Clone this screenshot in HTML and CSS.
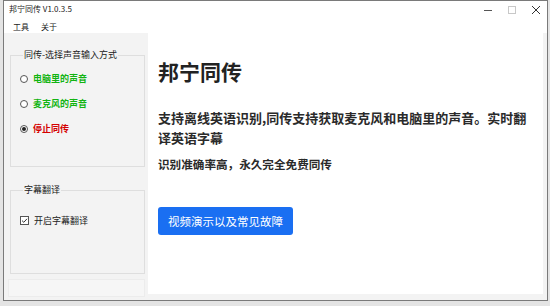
FILE: index.html
```html
<!DOCTYPE html>
<html lang="zh-CN">
<head>
<meta charset="utf-8">
<title>邦宁同传</title>
<link rel="stylesheet" href="styles.css">
</head>
<body>
<div class="screen">
  <div class="window">
    <div class="titlebar">
      <span class="title">邦宁同传 V1.0.3.5</span>
      <div class="controls">
        <svg class="ctl" width="10" height="10" viewBox="0 0 10 10"><path d="M1 5.5h8" stroke="#555" stroke-width="1"/></svg>
        <svg class="ctl" width="10" height="10" viewBox="0 0 10 10"><rect x="1.5" y="1.5" width="7" height="7" fill="none" stroke="#c8c8c8" stroke-width="1"/></svg>
        <svg class="ctl" width="10" height="10" viewBox="0 0 10 10"><path d="M1 1L9 9M9 1L1 9" stroke="#333" stroke-width="1"/></svg>
      </div>
    </div>
    <div class="menubar">
      <span class="menu">工具</span>
      <span class="menu">关于</span>
    </div>
    <div class="client">
      <div class="sidebar">
        <fieldset class="group g1">
          <legend>同传-选择声音输入方式</legend>
          <div class="opt green"><span class="radio"></span>电脑里的声音</div>
          <div class="opt green"><span class="radio"></span>麦克风的声音</div>
          <div class="opt red"><span class="radio on"></span>停止同传</div>
        </fieldset>
        <fieldset class="group g2">
          <legend>字幕翻译</legend>
          <div class="opt plain">
            <svg class="check" width="9" height="9" viewBox="0 0 9 9"><rect x="0.5" y="0.5" width="8" height="8" fill="#fff" stroke="#555"/><path d="M2 4.6L3.8 6.3L7 2.8" fill="none" stroke="#333" stroke-width="1"/></svg>开启字幕翻译
          </div>
        </fieldset>
        <div class="status"></div>
      </div>
      <div class="main">
        <h1 class="heading">邦宁同传</h1>
        <p class="lead">支持离线英语识别,同传支持获取麦克风和电脑里的声音。实时翻译英语字幕</p>
        <p class="sub">识别准确率高，永久完全免费同传</p>
        <button class="btn">视频演示以及常见故障</button>
      </div>
    </div>
  </div>
</div>
</body>
</html>
```
FILE: styles.css
```css
html, body {
  margin: 0;
  padding: 0;
}
body {
  font-family: "Noto Sans CJK SC", "Noto Sans", "DejaVu Sans", sans-serif;
  background: #e6e6e6;
}
.screen {
  width: 550px;
  height: 306px;
  overflow: hidden;
  background: #e4e4e4;
  padding-left: 3px;
  box-sizing: border-box;
}
.window {
  width: 545px;
  height: 301px;
  box-sizing: border-box;
  border: 1px solid #7a7a7a;
  background: #ffffff;
  display: flex;
  flex-direction: column;
}
.titlebar {
  height: 16px;
  flex: none;
  display: flex;
  align-items: center;
  justify-content: space-between;
  background: #ffffff;
}
.title {
  font-size: 8px;
  color: #222;
  margin-left: 5px;
  line-height: 10px;
}
.controls {
  display: flex;
  align-items: center;
  gap: 14px;
  margin-right: 6px;
  margin-top: 1px;
}
.ctl {
  display: block;
}
.menubar {
  height: 13px;
  flex: none;
  display: flex;
  align-items: center;
  gap: 12px;
  padding-left: 9px;
  padding-top: 3px;
  background: #ffffff;
}
.menu {
  font-size: 8px;
  color: #222;
  line-height: 10px;
}
.client {
  flex: 1;
  display: flex;
  background: #f3f3f3;
  min-height: 0;
}
.sidebar {
  width: 144px;
  flex: none;
  display: flex;
  flex-direction: column;
  padding-left: 6px;
  box-sizing: border-box;
}
.group {
  margin: 0;
  width: 135px;
  box-sizing: border-box;
  border: 1px solid #dedede;
  padding: 0 0 0 9px;
  min-width: 0;
}
.group legend {
  font-size: 9px;
  line-height: 12px;
  color: #222;
  padding: 0 1px;
  margin-left: 3px;
}
.g1 {
  margin-top: 16px;
  padding-top: 5px;
  padding-bottom: 25px;
}
.g2 {
  margin-top: 17px;
  padding-top: 14px;
  padding-bottom: 43px;
}
.opt {
  height: 25px;
  display: flex;
  align-items: center;
  font-size: 9px;
  font-weight: 700;
}
.g2 .opt {
  height: 20px;
}
.opt.green { color: #12b412; }
.opt.red { color: #d40000; }
.opt.plain {
  color: #222;
  font-weight: 400;
}
.radio {
  width: 8px;
  height: 8px;
  box-sizing: border-box;
  border: 1px solid #555;
  border-radius: 50%;
  background: #fff;
  margin-right: 5px;
  display: flex;
  align-items: center;
  justify-content: center;
}
.radio.on::after {
  content: "";
  width: 4px;
  height: 4px;
  border-radius: 50%;
  background: #222;
}
.check {
  display: block;
  margin-right: 5px;
}
.status {
  margin-top: 5px;
  width: 137px;
  height: 18px;
  margin-left: -2px;
  border: 1px solid #ececec;
  background: #f6f6f6;
  box-sizing: border-box;
}
.main {
  width: 395px;
  flex: none;
  background: #ffffff;
  margin-bottom: 6px;
  margin-top: -3px;
  padding: 29px 0 0 10px;
  box-sizing: border-box;
}
.heading {
  margin: 0;
  font-size: 21px;
  line-height: 24px;
  font-weight: 700;
  color: #222;
}
.lead {
  margin: 25px 0 0 0;
  width: 372px;
  font-size: 13px;
  line-height: 20px;
  font-weight: 700;
  color: #2a2a2a;
}
.sub {
  margin: 8px 0 0 0;
  font-size: 11.6px;
  line-height: 16px;
  font-weight: 700;
  color: #2a2a2a;
}
.btn {
  margin-top: 35px;
  width: 135px;
  height: 28px;
  border: none;
  border-radius: 3px;
  background: #1a6ff2;
  color: #ffffff;
  font-family: "Noto Sans CJK SC", "Noto Sans", sans-serif;
  font-size: 11.5px;
  padding: 0;
  display: flex;
  align-items: center;
  justify-content: center;
}
```
